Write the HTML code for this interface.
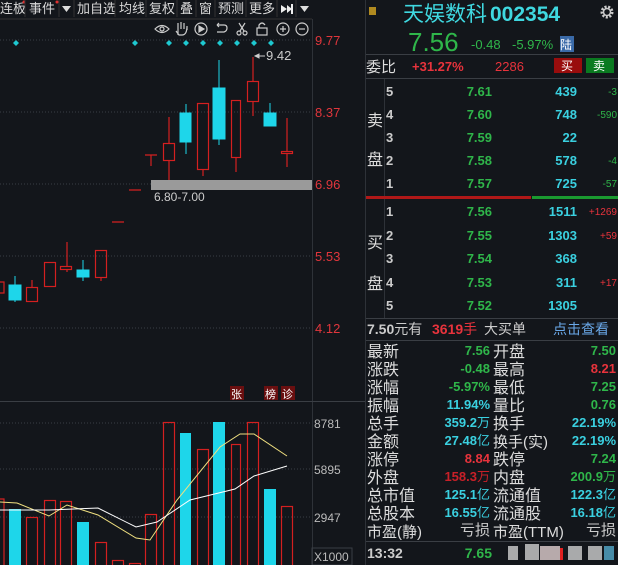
<!DOCTYPE html>
<html><head><meta charset="utf-8"><style>
html,body{margin:0;padding:0;background:#13161b;width:618px;height:565px;overflow:hidden}
svg{display:block}
text{font-family:"Liberation Sans","Noto Sans CJK SC",sans-serif}
.cn{font-family:"Noto Sans CJK SC","WenQuanYi Zen Hei",sans-serif}
.n{font-family:"Liberation Sans",sans-serif;font-weight:bold}
</style></head><body>
<svg width="618" height="565" viewBox="0 0 618 565" xmlns="http://www.w3.org/2000/svg">
<rect width="618" height="565" fill="#13161b"/>
<g class="cn" font-size="13" fill="#d8d8d8">
<text x="0" y="13">连板</text><text x="29" y="13">事件</text>
<text x="77" y="13">加自选</text><text x="119" y="13">均线</text><text x="149" y="13">复权</text>
<text x="180" y="13">叠</text><text x="199" y="13">窗</text><text x="218" y="13">预测</text><text x="249" y="13">更多</text>
</g>
<circle cx="24" cy="2" r="1.5" fill="#e03030"/><circle cx="57" cy="2" r="1.5" fill="#e03030"/>
<path d="M62 6h9l-4.5 6z M300 6h9l-4.5 6z" fill="#ddd"/>
<path d="M281 5l6 4-6 4z M287 5l5 4-5 4z" fill="#eee"/><rect x="291" y="4" width="2" height="10" fill="#eee"/>
<g stroke="#333" stroke-width="1"><line x1="25" y1="0" x2="25" y2="17"/><line x1="59" y1="0" x2="59" y2="17"/><line x1="74" y1="0" x2="74" y2="17"/><line x1="115" y1="0" x2="115" y2="17"/><line x1="146" y1="0" x2="146" y2="17"/><line x1="177" y1="0" x2="177" y2="17"/><line x1="196" y1="0" x2="196" y2="17"/><line x1="215" y1="0" x2="215" y2="17"/><line x1="246" y1="0" x2="246" y2="17"/><line x1="277" y1="0" x2="277" y2="17"/><line x1="296" y1="0" x2="296" y2="17"/></g>
<line x1="0" y1="19" x2="312" y2="19" stroke="#333"/>
<g stroke="#ccc" stroke-width="1.2" fill="none">
<path d="M155 29q7-7 14 0q-7 7-14 0z"/><circle cx="162" cy="29" r="2"/>
<path d="M178 35v-6m0 0v-6m3 6v-7m3 7v-6m3 7v-4q0 9-5 9h-3l-3-4"/>
<circle cx="201" cy="29" r="6"/><path d="M199 26v6l5-3z" fill="#ccc"/>
<path d="M217 25h7q3 0 3 3t-3 4h-7M217 25l2-2M217 25l2 2"/>
<circle cx="239" cy="33" r="2"/><circle cx="245" cy="33" r="2"/><path d="M240 31l5-8M244 31l-5-8"/>
<rect x="257" y="28" width="10" height="7"/><path d="M259 28v-3q3-4 6 0"/>
<circle cx="283" cy="29" r="6"/><path d="M280 29h6M283 26v6"/>
<circle cx="302" cy="29" r="6"/><path d="M299 29h6"/>
</g>
<g fill="#1ec8d0">
<path d="M16 40l3 3-3 3-3-3z"/><path d="M135 40l3 3-3 3-3-3z"/><path d="M169 40l3 3-3 3-3-3z"/><path d="M186 40l3 3-3 3-3-3z"/><path d="M203 40l3 3-3 3-3-3z"/><path d="M220 40l3 3-3 3-3-3z"/><path d="M237 40l3 3-3 3-3-3z"/><path d="M254 40l3 3-3 3-3-3z"/><path d="M271 40l3 3-3 3-3-3z"/>
</g>
<g stroke="#3a3e44" stroke-dasharray="1,2"><line x1="0" y1="40" x2="312" y2="40"/><line x1="0" y1="112" x2="312" y2="112"/><line x1="0" y1="184" x2="312" y2="184"/><line x1="0" y1="256" x2="312" y2="256"/><line x1="0" y1="328" x2="312" y2="328"/><line x1="0" y1="423" x2="312" y2="423"/><line x1="0" y1="469" x2="312" y2="469"/><line x1="0" y1="517" x2="312" y2="517"/></g>
<line x1="312.5" y1="19" x2="312.5" y2="565" stroke="#2e3238"/>
<line x1="365.5" y1="0" x2="365.5" y2="565" stroke="#2e3238"/>
<line x1="0" y1="401.5" x2="365" y2="401.5" stroke="#3a3e44"/>
<g font-size="13" fill="#e0363c"><text x="315" y="45">9.77</text><text x="315" y="117">8.37</text><text x="315" y="189">6.96</text><text x="315" y="261">5.53</text><text x="315" y="333">4.12</text></g>
<rect x="151" y="180" width="161" height="10" fill="#9a9a9a"/>
<text x="154" y="201" font-size="12" fill="#ccc" font-family="Liberation Mono">6.80-7.00</text>
<g stroke="#d42020" fill="none" stroke-width="1.2">
<path d="M112 222h12M129 190h12M145 155h12M151 155v11M0 282h4v11h-4"/>
<rect x="26.5" y="287.5" width="11" height="14"/><path d="M32 280v7"/>
<rect x="44.5" y="262.5" width="11" height="24"/>
<rect x="60.5" y="266.5" width="11" height="3"/><path d="M67 242v24M67 270v2"/>
<rect x="95.5" y="250.5" width="11" height="27"/><path d="M101 278v3"/>
<rect x="163.5" y="143.5" width="11" height="17"/><path d="M169 117v26M169 161v19"/>
<rect x="197.5" y="103.5" width="11" height="66"/><path d="M203 170v6"/>
<rect x="231.5" y="100.5" width="9" height="57"/><path d="M236 158v14"/>
<rect x="247.5" y="81.5" width="11" height="20"/><path d="M253 57v24M253 102v14"/>
<rect x="281.5" y="151.5" width="11" height="2"/><path d="M287 118v33M287 154v13"/>
</g>
<g fill="#1ed6ea" stroke="#1ed6ea">
<rect x="9" y="285" width="12" height="15"/><path d="M15 276v26"/>
<rect x="77" y="270" width="12" height="7"/><path d="M83 260v21"/>
<rect x="180" y="113" width="11" height="29"/><path d="M186 104v50"/>
<rect x="213" y="88" width="12" height="51"/><path d="M219 60v85"/>
<rect x="264" y="113" width="12" height="13"/><path d="M270 103v10"/>
</g>
<path d="M255 56h10M255 56l4-2v4z" stroke="#ccc" fill="#ccc"/>
<text x="266" y="60" font-size="13" fill="#ccc">9.42</text>
<g class="cn" font-size="11" fill="#fff"><rect x="230" y="386" width="14" height="14" fill="#6a0f10"/><text x="231" y="398">张</text><rect x="264" y="386" width="14" height="14" fill="#6a0f10"/><text x="265" y="398">榜</text><rect x="281" y="386" width="14" height="14" fill="#6a0f10"/><text x="282" y="398">诊</text></g>
<g font-size="12" fill="#bbb"><text x="314" y="428">8781</text><text x="314" y="474">5895</text><text x="314" y="522">2947</text><text x="314" y="561">X1000</text></g>
<rect x="312" y="548" width="40" height="17" fill="none" stroke="#3a3e44"/>
<g stroke="#d42020" fill="none" stroke-width="1.2">
<path d="M0 499h4v66"/>
<rect x="26.5" y="517.5" width="11" height="50"/><rect x="44.5" y="500.5" width="11" height="70"/><rect x="60.5" y="501.5" width="11" height="70"/><rect x="95.5" y="542.5" width="11" height="30"/><rect x="112.5" y="560.5" width="11" height="10"/><rect x="129.5" y="563.5" width="11" height="10"/><rect x="145.5" y="514.5" width="11" height="60"/><rect x="163.5" y="422.5" width="11" height="150"/><rect x="197.5" y="449.5" width="11" height="120"/><rect x="231.5" y="444.5" width="9" height="130"/><rect x="247.5" y="422.5" width="11" height="150"/><rect x="281.5" y="506.5" width="11" height="70"/>
</g>
<g fill="#1ed6ea"><rect x="9" y="509" width="12" height="56"/><rect x="77" y="522" width="12" height="43"/><rect x="180" y="433" width="11" height="132"/><rect x="213" y="422" width="12" height="143"/><rect x="264" y="489" width="12" height="76"/></g>
<polyline points="0,502 17,503 49,516 67,505 98,515 136,538 150,540 177,500 220,447 240,434 254,434 287,456" fill="none" stroke="#f0e080" stroke-width="1"/>
<polyline points="0,510 49,510 98,508 136,527 157,522 190,500 235,489 254,476 287,466" fill="none" stroke="#fff" stroke-width="1"/>
<rect x="369" y="7" width="7" height="8" fill="#b08a20"/>
<text x="403" y="21" class="cn" font-size="21" fill="#3fd8e0">天娱数科</text>
<text x="490" y="21" font-size="21" fill="#3fd8e0" font-family="Liberation Sans" font-weight="bold">002354</text>
<circle cx="607" cy="12" r="5" fill="none" stroke="#ccc" stroke-width="3" stroke-dasharray="2,1.5"/><circle cx="607" cy="12" r="3.5" fill="none" stroke="#ccc" stroke-width="1.5"/>
<text x="408" y="51" font-size="26" fill="#2fb64a" font-family="Liberation Mono">7.56</text>
<text x="471" y="49" font-size="13" fill="#2fb64a">-0.48</text>
<text x="512" y="49" font-size="13" fill="#2fb64a">-5.97%</text>
<rect x="560" y="36" width="14" height="16" fill="#3a6aa8"/><text x="560" y="49" class="cn" font-size="12" fill="#fff">陆</text>
<line x1="366" y1="54.5" x2="618" y2="54.5" stroke="#3a3e44"/>
<text x="366" y="72" class="cn" font-size="15" fill="#ddd">委比</text>
<text x="412" y="71" font-size="13" fill="#e8333c" font-weight="bold">+31.27%</text>
<text x="495" y="71" font-size="13" fill="#e8333c">2286</text>
<rect x="554" y="58" width="28" height="15" fill="#990d0d"/><text x="561" y="70" class="cn" font-size="12" fill="#fff">买</text>
<rect x="586" y="58" width="28" height="15" fill="#0a7a20"/><text x="593" y="70" class="cn" font-size="12" fill="#fff">卖</text>
<line x1="366" y1="78.5" x2="618" y2="78.5" stroke="#3a3e44"/>
<line x1="384.5" y1="79" x2="384.5" y2="318" stroke="#2e3238"/>
<g class="cn" font-size="16" fill="#ddd"><text x="367" y="126">卖</text><text x="367" y="165">盘</text><text x="367" y="248">买</text><text x="367" y="289">盘</text></g>
<g font-size="13" class="n" fill="#ccc"><text x="386" y="96">5</text><text x="386" y="119">4</text><text x="386" y="142">3</text><text x="386" y="165">2</text><text x="386" y="188">1</text>
<text x="386" y="216">1</text><text x="386" y="240">2</text><text x="386" y="263">3</text><text x="386" y="287">4</text><text x="386" y="310">5</text></g>
<g font-size="13" class="n" fill="#2fb64a" text-anchor="end"><text x="492" y="96">7.61</text><text x="492" y="119">7.60</text><text x="492" y="142">7.59</text><text x="492" y="165">7.58</text><text x="492" y="188">7.57</text>
<text x="492" y="216">7.56</text><text x="492" y="240">7.55</text><text x="492" y="263">7.54</text><text x="492" y="287">7.53</text><text x="492" y="310">7.52</text></g>
<g font-size="13" class="n" fill="#3ad0e0" text-anchor="end"><text x="577" y="96">439</text><text x="577" y="119">748</text><text x="577" y="142">22</text><text x="577" y="165">578</text><text x="577" y="188">725</text>
<text x="577" y="216">1511</text><text x="577" y="240">1303</text><text x="577" y="263">368</text><text x="577" y="287">311</text><text x="577" y="310">1305</text></g>
<g font-size="10" text-anchor="end" fill="#2fb64a"><text x="617" y="95">-3</text><text x="617" y="118">-590</text><text x="617" y="164">-4</text><text x="617" y="187">-57</text></g>
<g font-size="10" text-anchor="end" fill="#e8333c"><text x="617" y="215">+1269</text><text x="617" y="239">+59</text><text x="617" y="286">+17</text></g>
<rect x="366" y="196" width="165" height="3" fill="#b01818"/><rect x="532" y="196" width="86" height="3" fill="#1a9a30"/>
<line x1="366" y1="318.5" x2="618" y2="318.5" stroke="#3a3e44"/>
<text x="367" y="334" font-size="14" fill="#ccc"><tspan class="n">7.50</tspan><tspan class="cn">元有</tspan></text>
<text x="432" y="334" font-size="14" fill="#e8333c"><tspan class="n">3619</tspan><tspan class="cn">手</tspan></text>
<text x="484" y="334" class="cn" font-size="14" fill="#ccc">大买单</text>
<text x="553" y="334" class="cn" font-size="14" fill="#6aa8e8">点击查看</text>
<line x1="366" y1="340.5" x2="618" y2="340.5" stroke="#3a3e44"/>
<g class="cn" font-size="16" fill="#ddd">
<text x="367" y="357">最新</text><text x="367" y="375">涨跌</text><text x="367" y="393">涨幅</text><text x="367" y="411">振幅</text><text x="367" y="429">总手</text><text x="367" y="447">金额</text><text x="367" y="465">涨停</text><text x="367" y="483">外盘</text><text x="367" y="501">总市值</text><text x="367" y="519">总股本</text><text x="367" y="537" font-size="15">市盈(静)</text>
<text x="493" y="357">开盘</text><text x="493" y="375">最高</text><text x="493" y="393">最低</text><text x="493" y="411">量比</text><text x="493" y="429">换手</text><text x="493" y="447" font-size="15">换手(实)</text><text x="493" y="465">跌停</text><text x="493" y="483">内盘</text><text x="493" y="501">流通值</text><text x="493" y="519">流通股</text><text x="493" y="537" font-size="15">市盈(TTM)</text>
</g>
<g font-size="13" class="n" text-anchor="end">
<text x="490" y="355" fill="#2fb64a">7.56</text><text x="490" y="373" fill="#2fb64a">-0.48</text><text x="490" y="391" fill="#2fb64a">-5.97%</text><text x="490" y="409" fill="#3ad0e0">11.94%</text><text x="490" y="427" fill="#3ad0e0">359.2<tspan class="cn" font-weight="normal">万</tspan></text><text x="490" y="445" fill="#3ad0e0">27.48<tspan class="cn" font-weight="normal">亿</tspan></text><text x="490" y="463" fill="#e8333c">8.84</text><text x="490" y="481" fill="#c82028">158.3<tspan class="cn" font-weight="normal">万</tspan></text><text x="490" y="499" fill="#3ad0e0">125.1<tspan class="cn" font-weight="normal">亿</tspan></text><text x="490" y="517" fill="#3ad0e0">16.55<tspan class="cn" font-weight="normal">亿</tspan></text><text x="490" y="535" fill="#ccc" class="cn" font-weight="normal" font-size="15">亏损</text>
<text x="616" y="355" fill="#2fb64a">7.50</text><text x="616" y="373" fill="#e8333c">8.21</text><text x="616" y="391" fill="#2fb64a">7.25</text><text x="616" y="409" fill="#2fb64a">0.76</text><text x="616" y="427" fill="#3ad0e0">22.19%</text><text x="616" y="445" fill="#3ad0e0">22.19%</text><text x="616" y="463" fill="#2fb64a">7.24</text><text x="616" y="481" fill="#2fb64a">200.9<tspan class="cn" font-weight="normal">万</tspan></text><text x="616" y="499" fill="#3ad0e0">122.3<tspan class="cn" font-weight="normal">亿</tspan></text><text x="616" y="517" fill="#3ad0e0">16.18<tspan class="cn" font-weight="normal">亿</tspan></text><text x="616" y="535" fill="#ccc" class="cn" font-weight="normal" font-size="15">亏损</text>
</g>
<line x1="366" y1="541.5" x2="618" y2="541.5" stroke="#3a3e44"/>
<text x="367" y="558" font-size="14" class="n" fill="#ccc">13:32</text>
<text x="492" y="558" font-size="14" class="n" fill="#2fb64a" text-anchor="end">7.65</text>
<g fill="#cfcfcf" opacity="0.8"><rect x="508" y="546" width="10" height="14"/><rect x="525" y="544" width="14" height="16"/><rect x="540" y="546" width="20" height="14" fill="#e0d0d0"/><rect x="568" y="546" width="14" height="14"/><rect x="588" y="546" width="14" height="14"/><rect x="604" y="546" width="10" height="14" fill="#5ac"/></g>
<rect x="560" y="548" width="3" height="12" fill="#e02020"/>
</svg>
</body></html>
